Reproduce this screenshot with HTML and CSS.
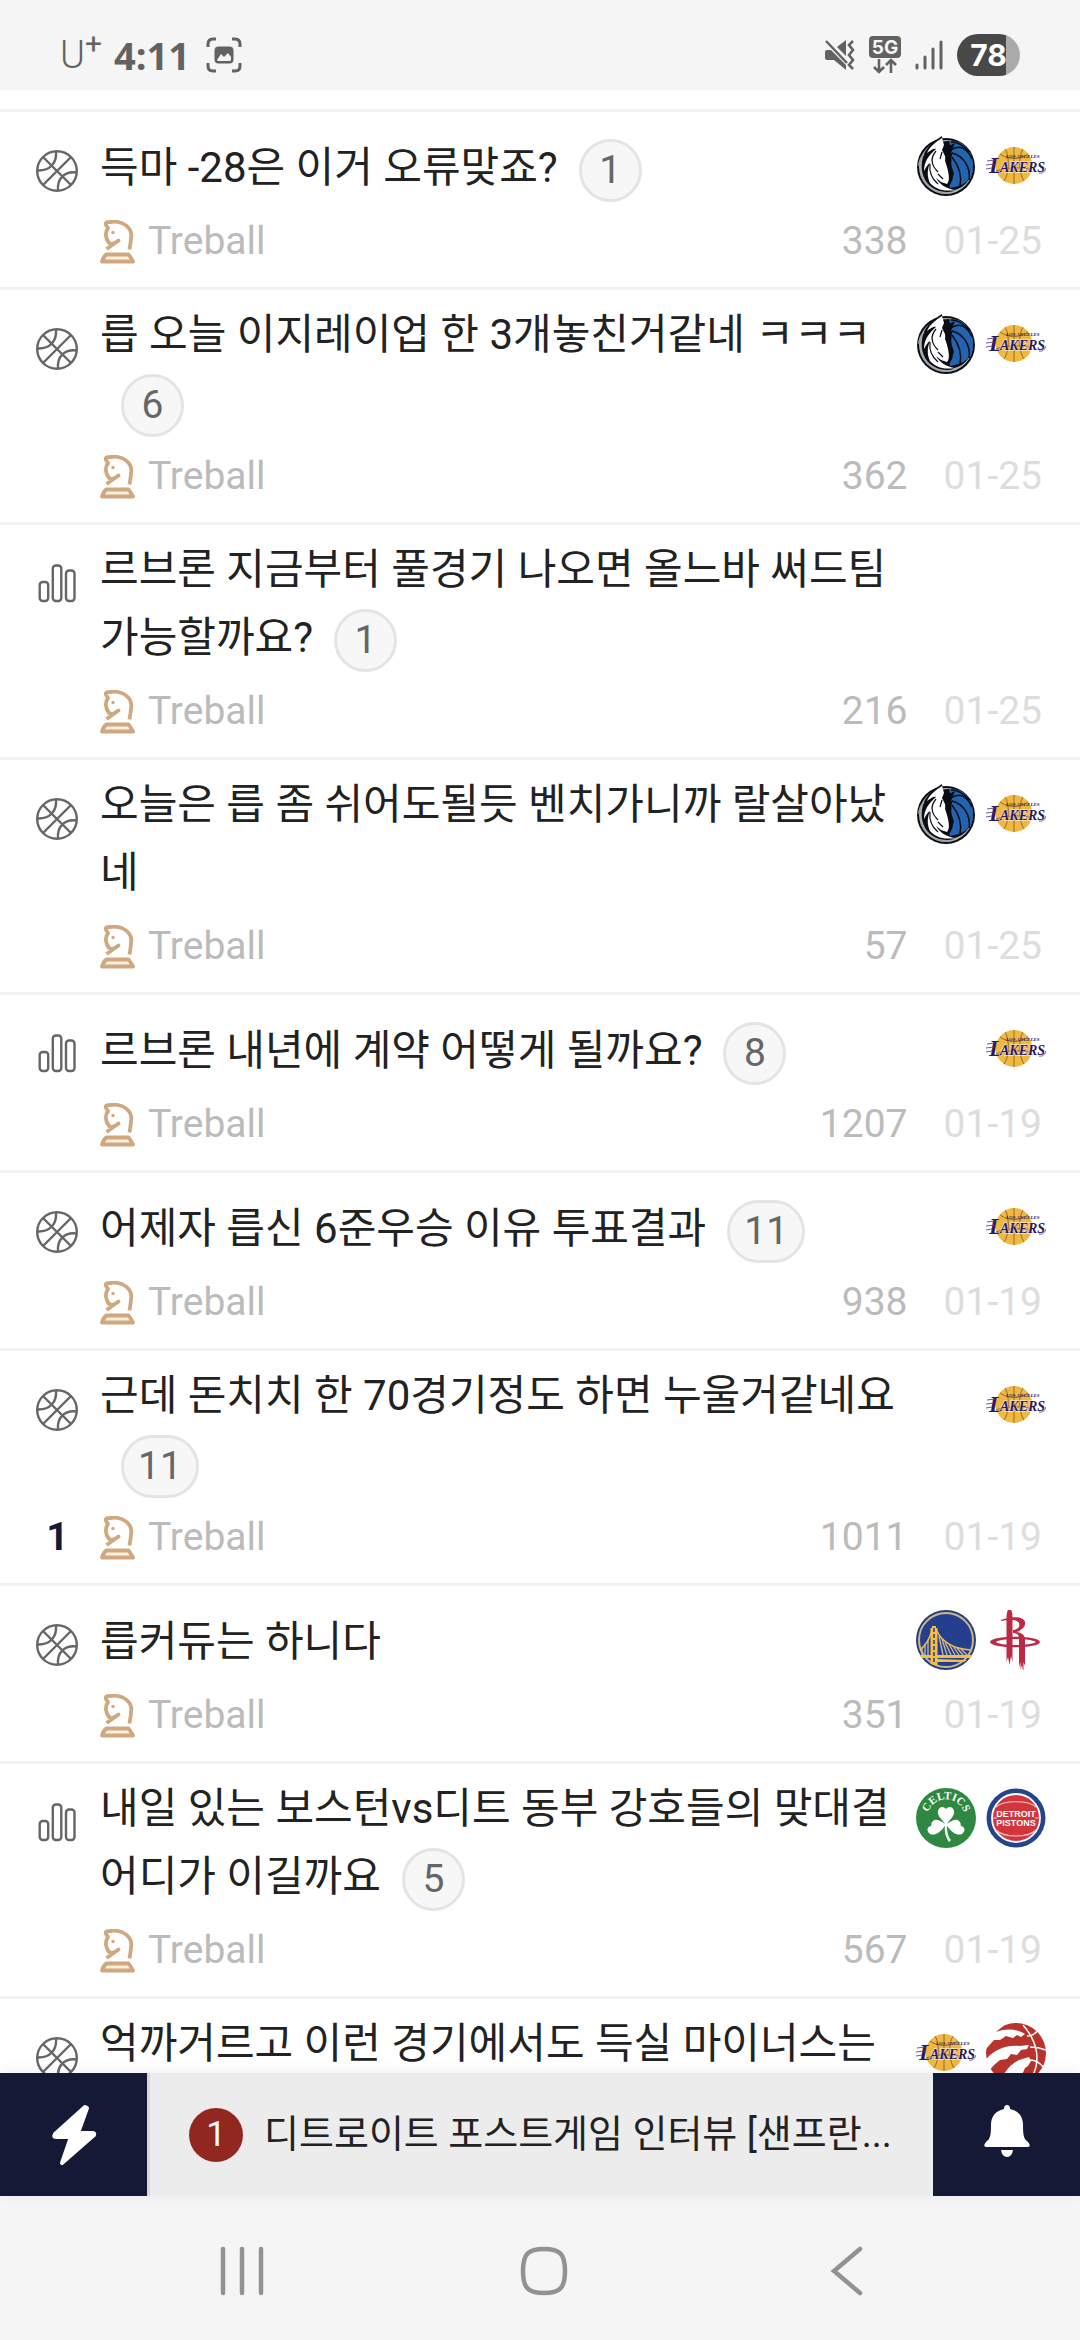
FILE: index.html
```html
<!DOCTYPE html>
<html lang="ko">
<head>
    <meta charset="UTF-8">
    <meta name="viewport" content="width=device-width, initial-scale=1.0">
    <title>Treball</title>
    <link rel="stylesheet" href="styles.css">
</head>
<body>
    <!-- shared icons -->
    <svg class="sprite" aria-hidden="true">
        <symbol id="ball" viewBox="0 0 42 42">
            <g fill="none" stroke="#666" stroke-width="2.4">
                <circle cx="21" cy="21" r="19.8"/>
                <path d="M7 7L35 35M35 7L7 35"/>
                <path d="M20 1.500C21 13 14 21 1.500 20.500M22 40.500C21 29 28 21 40.500 22.500"/>
            </g>
        </symbol>
        <symbol id="poll" viewBox="0 0 42 42">
            <g fill="none" stroke="#666" stroke-width="2.4">
                <rect x="3.700" y="19" width="8.500" height="19" rx="3"/>
                <rect x="16.800" y="2.500" width="8.500" height="35.500" rx="3"/>
                <rect x="30" y="7.500" width="8.500" height="30.500" rx="3"/>
            </g>
        </symbol>
        <symbol id="knight" viewBox="0 0 35 44">
            <g fill="none" stroke="#d0a880" stroke-width="3.800" stroke-linejoin="round">
                <path d="M6.500 29L18.500 20.500C13 25 11 24 9 23C5 18 5 12 8 8L6 5C5 2 7 2 10 2C24 0 33 9 31 18C31 22 30 25 29.500 29.500"/>
                <path d="M6.500 34.500H28.500C30 36 31 38 33 41.500H2C3 38 4 36 6.500 34.500Z" fill="#fdf0dc"/>
            </g>
            <circle cx="13" cy="12.500" r="1.700" fill="#d0a880"/>
        </symbol>

        <!-- team logos -->
        <symbol id="mavericks" viewBox="0 0 60 60">
            <circle cx="30" cy="31" r="29" fill="#0a0d12"/>
            <circle cx="30" cy="31" r="27" fill="#aeb3b8"/>
            <circle cx="32" cy="30" r="25" fill="#0a0d12"/>
            <path d="M33 5C50 4 58 18 57 32C56 44 48 50 34 52C32 38 39 28 33 5Z" fill="#2463b0"/>
            <path d="M35 14C43 8 51 12 56 23M36 17C48 20 55 32 53 44M36 21C43 30 46 40 44 50M35 6C43 6 47 10 54 16" fill="none" stroke="#0a0d12" stroke-width="1.500"/>
            <path d="M26 0C20 4 12 9 8 18C4 28 5 40 12 48C18 54 27 58 38 55C31 54 26 51 23 47L33 50C38 44 38 39 34 30L33 22L39 7L31 11L27 8Z" fill="#0a0d12"/>
            <path d="M26 2C20 6 14 10 11 17C15 14 18 12 20 13C12 20 8 26 8 35C10 31 12 28 14 27C11 34 11 41 14 47C20 53 27 56 38 54C30 52 24 49 20 42L25 46L31 48C34 45 33 38 31 31L29 20L26 14L28 9Z" fill="#fff"/>
            <path d="M20 15C14 22 15 29 22 36M14 28C13 36 16 43 22 48M22 38L27 43M26 16L24 23" fill="none" stroke="#0a0d12" stroke-width="1.200"/>
            <path d="M5 39C10 52 21 58 34 57M3 30C3 25 6 20 8 18" fill="none" stroke="#9da2a6" stroke-width="1.600"/>
            <path d="M31 13L36 10L34 18L37 16L34 25L38 38L33 48L33 35L29 25Z" fill="#0a0d12"/>
        </symbol>
        <symbol id="lakers" viewBox="0 0 60 60">
            <circle cx="28" cy="29.500" r="18.500" fill="#f0b840"/>
            <path d="M28 11V48M14 18C22 24 35 24 42 18M19 13C24 20 23 39 18 45M37 13C32 21 33 38 38 45M10 35C20 31 38 31 46 34" fill="none" stroke="#6d4a20" stroke-width="0.700"/>
            <g font-family="Liberation Serif, serif" font-weight="bold" font-style="italic" fill="#2b1762">
                <text x="20" y="22" font-size="5">LOS ANGELES</text>
                <text x="3" y="37" font-size="23">L</text>
                <text x="14" y="36" font-size="14" stroke="#fff" stroke-width="0.800" paint-order="stroke">AKERS</text>
            </g>
            <path d="M1 25L9 24M0 29L8 28M0 33L6 32M53 37C57 38 59 35 60 32" fill="none" stroke="#604498" stroke-width="0.900"/>
        </symbol>
        <symbol id="warriors" viewBox="0 0 60 60">
            <circle cx="30" cy="30" r="30" fill="#263f73"/>
            <circle cx="30" cy="30" r="27" fill="#243f90" stroke="#ccb68f" stroke-width="2"/>
            <path d="M4 40C10 35 14 28 16 20M20 19C26 34 40 39 55 40" fill="none" stroke="#f5bd43" stroke-width="1.500"/>
            <path d="M6 38V45M9 35V45M12 30V45M23 26L27 45M26 29L31 45M29 32L35 45M33 34L39 45M37 36L43 45M41 38L47 45M45 39L51 45" stroke="#cdbb96" stroke-width="1.300"/>
            <path d="M4 45H56L55 48H5ZM21 49L51 50L48 52H21Z" fill="#f5bd43"/>
            <path d="M14.500 18H16V16H20V18H21.500V56L14.500 54Z" fill="#f5bd43"/>
            <path d="M18 18V54" stroke="#243f90" stroke-width="1.500" stroke-dasharray="4 2"/>
        </symbol>
        <symbol id="rockets" viewBox="0 0 60 60">
            <g fill="#bd2845">
                <path d="M23.500 -3C26 1 26.500 3 26.500 8V52L25 46L23.500 55L22 47L20.500 52V8C20.500 4 21 1 23.500 -3Z"/>
                <path d="M15 10C22 7 37 5 39 12C40 17 35 20 31 22C36 23 39 25 39 30V56L37.500 52V64L36 55L34.500 60V52L33 57V28C33 24 30 23 27 23V20C33 19 34 16 33 13C31 9 22 10 15 11Z"/>
                <path fill-rule="evenodd" d="M4 32C5 25 53 25 54 32C53 39 5 39 4 32ZM10 32C13 36 45 36 50 32C45 28 14 28 10 32Z"/>
            </g>
        </symbol>
        <symbol id="celtics" viewBox="0 0 60 60">
            <path id="celtics-arc" d="M12 35A18.700 18.700 0 1 1 48 35" fill="none"/>
            <circle cx="30" cy="30" r="30" fill="#2f8842"/>
            <text font-family="Liberation Serif, serif" font-weight="bold" font-size="11" fill="#fff" text-anchor="middle"><textPath href="#celtics-arc" startOffset="50%">CELTICS</textPath></text>
            <g fill="#fff">
                <path d="M30 37C25 30 21 28 22 23C23 18 28 18 30 21C32 18 37 18 38 23C39 28 34 31 30 37Z"/>
                <path d="M30 36C24 33 20 30 17 33C14 36 16 38 15 38C10 39 11 44 14 46C18 48 25 45 30 36Z"/>
                <path d="M30 36C36 33 40 30 43 33C46 36 44 38 45 38C50 39 49 44 46 46C42 48 35 45 30 36Z"/>
                <path d="M29 36H31C31 44 32 49 35 52L33 54C30 49 28 45 29 36Z"/>
            </g>
        </symbol>
        <symbol id="pistons" viewBox="0 0 60 60">
            <circle cx="30" cy="30" r="29.500" fill="#24458b"/>
            <circle cx="30" cy="30" r="24" fill="#d2363c" stroke="#fff" stroke-width="1.800"/>
            <path d="M10 19C18 12 42 12 50 19M10 42C18 50 42 50 50 42M6 30H11M49 30H54" fill="none" stroke="#f3c6c8" stroke-width="1.200"/>
            <g font-family="Liberation Sans, sans-serif" font-weight="bold" font-size="9" fill="#fff" text-anchor="middle">
                <text x="30" y="29">DETROIT</text>
                <text x="30" y="38">PISTONS</text>
            </g>
        </symbol>
        <symbol id="raptors" viewBox="0 0 60 60">
            <circle cx="30" cy="30" r="30" fill="#b8332e"/>
            <path d="M0 0H21L10 9C20 5 31 6 39 11L35 14L31 12L27 15L20 13L14 17L8 17L0 26Z" fill="#fff"/>
            <path d="M0 36C10 26 20 22 33 23L43 22L41 26L35 27L31 32L25 31L21 36L14 37L8 42L3 48L0 60Z" fill="#fff"/>
            <path d="M14 60C18 48 24 42 33 37L43 34L45 38L42 43L39 45L36 52L30 60Z" fill="#fff"/>
            <path d="M37 2C51 18 57 39 43 59M41 13C47 13 50 10 52 7M44 24C50 24 55 25 60 27M44 37C50 37 54 40 57 44" fill="none" stroke="#fff" stroke-width="1.500"/>
        </symbol>
    </svg>

    <header class="status-bar">
        <div class="status-left">
            <span class="carrier">U<sup>+</sup></span>
            <span class="clock">4:11</span>
            <svg class="capture" width="36" height="36" viewBox="0 0 36 36">
                <path d="M2 10V7Q2 2 7 2H10M26 2H29Q34 2 34 7V10M34 26V29Q34 34 29 34H26M10 34H7Q2 34 2 29V26" fill="none" stroke="#626262" stroke-width="3"/>
                <rect x="8.500" y="9.500" width="19" height="17" rx="4" fill="#626262"/>
                <path d="M11 23L15 17L18 20L22 16L25 20V23Q25 24 23 24H12Z" fill="#f5f5f5"/>
            </svg>
        </div>
        <div class="status-right">
            <svg width="30" height="30" viewBox="0 0 30 30">
                <path d="M0 12Q0 10 2 10H6L21 25V30L9 20H2Q0 20 0 18ZM12 7L21 0V16Z" fill="#626262"/>
                <path d="M1 1L22 23" stroke="#626262" stroke-width="2.500"/>
                <path d="M28 1L24 5L28 10L24 15L28 20L24 25L28 29" fill="none" stroke="#626262" stroke-width="2.600"/>
            </svg>
            <svg width="32" height="38" viewBox="0 0 32 38">
                <rect width="32" height="22" rx="4" fill="#626262"/>
                <text x="16" y="18" text-anchor="middle" font-family="Inter, sans-serif" font-size="19" font-weight="700" fill="#f5f5f5">5G</text>
                <path d="M10 23V36M5 31L10 36L15 31M22 37V24M17 29L22 24L27 29" fill="none" stroke="#626262" stroke-width="2.600"/>
            </svg>
            <svg width="28" height="30" viewBox="0 0 28 30">
                <path d="M2 25V28M10 17V28M18 9V28M26 2V28" stroke="#626262" stroke-width="3" stroke-linecap="round"/>
            </svg>
            <span class="battery">78</span>
        </div>
    </header>

    <main class="board">
        <article class="post single">
            <svg class="kind"><use href="#ball"/></svg>
            <a class="title" href="#">득마 -28은 이거 오류맞죠?<span class="count">1</span></a>
            <div class="teams"><svg><use href="#mavericks"/></svg><svg><use href="#lakers"/></svg></div>
            <span class="likes"></span>
            <div class="meta"><svg class="rank"><use href="#knight"/></svg><span class="author">Treball</span><span class="views">338</span><time>01-25</time></div>
        </article>

        <article class="post">
            <svg class="kind"><use href="#ball"/></svg>
            <a class="title" href="#">릅 오늘 이지레이업 한 3개놓친거같네 ㅋㅋㅋ<span class="count">6</span></a>
            <div class="teams"><svg><use href="#mavericks"/></svg><svg><use href="#lakers"/></svg></div>
            <span class="likes"></span>
            <div class="meta"><svg class="rank"><use href="#knight"/></svg><span class="author">Treball</span><span class="views">362</span><time>01-25</time></div>
        </article>

        <article class="post">
            <svg class="kind"><use href="#poll"/></svg>
            <a class="title" href="#">르브론 지금부터 풀경기 나오면 올느바 써드팀 가능할까요?<span class="count">1</span></a>
            <div class="teams"></div>
            <span class="likes"></span>
            <div class="meta"><svg class="rank"><use href="#knight"/></svg><span class="author">Treball</span><span class="views">216</span><time>01-25</time></div>
        </article>

        <article class="post">
            <svg class="kind"><use href="#ball"/></svg>
            <a class="title" href="#">오늘은 릅 좀 쉬어도될듯 벤치가니까 랄살아났네</a>
            <div class="teams"><svg><use href="#mavericks"/></svg><svg><use href="#lakers"/></svg></div>
            <span class="likes"></span>
            <div class="meta"><svg class="rank"><use href="#knight"/></svg><span class="author">Treball</span><span class="views">57</span><time>01-25</time></div>
        </article>

        <article class="post single">
            <svg class="kind"><use href="#poll"/></svg>
            <a class="title" href="#">르브론 내년에 계약 어떻게 될까요?<span class="count">8</span></a>
            <div class="teams"><svg><use href="#lakers"/></svg></div>
            <span class="likes"></span>
            <div class="meta"><svg class="rank"><use href="#knight"/></svg><span class="author">Treball</span><span class="views">1207</span><time>01-19</time></div>
        </article>

        <article class="post single">
            <svg class="kind"><use href="#ball"/></svg>
            <a class="title" href="#">어제자 릅신 6준우승 이유 투표결과<span class="count">11</span></a>
            <div class="teams"><svg><use href="#lakers"/></svg></div>
            <span class="likes"></span>
            <div class="meta"><svg class="rank"><use href="#knight"/></svg><span class="author">Treball</span><span class="views">938</span><time>01-19</time></div>
        </article>

        <article class="post">
            <svg class="kind"><use href="#ball"/></svg>
            <a class="title" href="#">근데 돈치치 한 70경기정도 하면 누울거같네요<span class="count">11</span></a>
            <div class="teams"><svg><use href="#lakers"/></svg></div>
            <span class="likes">1</span>
            <div class="meta"><svg class="rank"><use href="#knight"/></svg><span class="author">Treball</span><span class="views">1011</span><time>01-19</time></div>
        </article>

        <article class="post single">
            <svg class="kind"><use href="#ball"/></svg>
            <a class="title" href="#">릅커듀는 하니다</a>
            <div class="teams"><svg><use href="#warriors"/></svg><svg><use href="#rockets"/></svg></div>
            <span class="likes"></span>
            <div class="meta"><svg class="rank"><use href="#knight"/></svg><span class="author">Treball</span><span class="views">351</span><time>01-19</time></div>
        </article>

        <article class="post">
            <svg class="kind"><use href="#poll"/></svg>
            <a class="title" href="#">내일 있는 보스턴vs디트 동부 강호들의 맞대결 어디가 이길까요<span class="count">5</span></a>
            <div class="teams"><svg><use href="#celtics"/></svg><svg><use href="#pistons"/></svg></div>
            <span class="likes"></span>
            <div class="meta"><svg class="rank"><use href="#knight"/></svg><span class="author">Treball</span><span class="views">567</span><time>01-19</time></div>
        </article>

        <article class="post">
            <svg class="kind"><use href="#ball"/></svg>
            <a class="title" href="#">억까거르고 이런 경기에서도 득실 마이너스는</a>
            <div class="teams"><svg><use href="#lakers"/></svg><svg><use href="#raptors"/></svg></div>
        </article>
    </main>

    <footer class="ticker">
        <button class="ticker-button" aria-label="번개">
            <svg width="46" height="62" viewBox="0 0 46 62"><path d="M34 3L4 30Q2 33 5 33H20L11 59L43 31Q44 29 41 29H27L36 4Z" fill="#fff" stroke="#fff" stroke-width="4" stroke-linejoin="round"/></svg>
        </button>
        <a class="headline" href="#">
            <span class="number">1</span>
            <span class="headline-text">디트로이트 포스트게임 인터뷰 [샌프란...</span>
        </a>
        <button class="ticker-button" aria-label="알림">
            <svg width="46" height="62" viewBox="0 0 46 62"><path d="M23 1Q26 1 26 5C35 7 39 13 39 21C39 32 40 35 44 38Q48 43 43 43H3Q-2 43 2 38C6 35 7 32 7 21C7 13 11 7 20 5Q20 1 23 1ZM17 46H29Q28 53 23 53Q18 53 17 46Z" fill="#fff"/></svg>
        </button>
    </footer>

    <nav class="system-nav">
        <button aria-label="최근 앱"><svg width="48" height="50" viewBox="0 0 48 50"><path d="M5 3V47M24 3V47M43 3V47"/></svg></button>
        <button aria-label="홈"><svg width="48" height="50" viewBox="0 0 48 50"><path d="M24 3C40 3 45 8 45 25S40 47 24 47S3 42 3 25S8 3 24 3Z"/></svg></button>
        <button aria-label="뒤로"><svg width="48" height="50" viewBox="0 0 48 50"><path d="M37 3L11 25L37 47"/></svg></button>
    </nav>
</body>
</html>
```

FILE: styles.css
```css
* {
    box-sizing: border-box;
}

body {
    display: flex;
    flex-direction: column;
    height: 100vh;
    margin: 0;
    overflow: hidden;
    background: #fff;
    color: #222;
    font-family: Roboto, 'Noto Sans CJK KR', sans-serif;
}

a {
    color: inherit;
    text-decoration: none;
}

button {
    padding: 0;
    border: none;
    background: none;
    cursor: pointer;
}

svg {
    display: block;
    flex: none;
}

.sprite {
    display: none;
}

/* Status bar */
.status-bar {
    display: flex;
    justify-content: space-between;
    align-items: center;
    flex: none;
    height: 90px;
    padding: 20px 60px 0;
    background: #f5f5f5;
    color: #626262;
}

.status-left,
.status-right {
    display: flex;
    align-items: center;
}

.carrier {
    font-size: 38px;
    font-weight: 300;
    line-height: 40px;
}

.carrier sup {
    font-size: 30px;
    font-weight: 400;
    line-height: 0;
}

.clock {
    margin-left: 12px;
    font-family: 'Open Sans', sans-serif;
    font-size: 38px;
    font-weight: 700;
    line-height: 40px;
}

.capture {
    margin-left: 16px;
}

.status-right {
    gap: 14px;
}

.battery {
    width: 63px;
    height: 42px;
    border-radius: 21px;
    background: linear-gradient(90deg, #484848 78%, #aaa 78%);
    color: #fff;
    font-family: Inter, sans-serif;
    font-size: 30px;
    font-weight: 700;
    line-height: 42px;
    text-align: center;
}

/* Post list */
.board {
    flex: 1;
    min-height: 0;
    padding-top: 19px;
    overflow: hidden;
}

.post {
    display: grid;
    grid-template-columns: 43px 1fr auto;
    column-gap: 21px;
    padding: 11px 34px 17px 36px;
    border-top: 3px solid #f2f2f2;
}

.kind {
    width: 42px;
    height: 42px;
    margin-top: 27px;
}

.title {
    font-size: 42px;
    line-height: 68px;
}

.single .title {
    padding-top: 11px;
}

.count {
    display: inline-block;
    min-width: 63px;
    height: 63px;
    margin-left: 21px;
    padding: 0 14px;
    border: 3px solid #e4e4e4;
    border-radius: 32px;
    background: #f7f7f7;
    color: #666;
    font-size: 39px;
    line-height: 57px;
    text-align: center;
    vertical-align: bottom;
}

.teams {
    display: flex;
    justify-content: flex-end;
    gap: 10px;
    min-width: 119px;
    padding-top: 13px;
}

.teams svg {
    width: 60px;
    height: 60px;
    overflow: visible;
}

.meta {
    grid-column: 2 / 4;
    display: flex;
    align-items: center;
    height: 57px;
    padding-right: 4px;
    margin-top: 11px;
    color: #bbb;
    font-size: 39px;
    line-height: 57px;
}

.rank {
    width: 35px;
    height: 44px;
    margin-right: 13px;
}

.views {
    margin-left: auto;
}

.meta time {
    margin-left: 36px;
    color: #ddd;
}

.likes {
    margin-top: 11px;
    color: #141a36;
    font-size: 39px;
    font-weight: 700;
    line-height: 57px;
    text-align: center;
}

/* Headline ticker */
.ticker {
    display: flex;
    position: relative;
    flex: none;
    height: 123px;
    background: #ececec;
    box-shadow: 0 -2px 14px rgba(0, 0, 0, 0.06);
}

.ticker-button {
    display: flex;
    justify-content: center;
    align-items: center;
    width: 147px;
    background: #141a36;
}

.headline {
    display: flex;
    flex: 1;
    align-items: center;
    gap: 21px;
    min-width: 0;
    padding: 0 36px 0 39px;
    border-left: 3px solid #d5d8df;
}

.number {
    flex: none;
    width: 54px;
    height: 54px;
    border-radius: 50%;
    background: #922722;
    color: #fff;
    font-size: 35px;
    line-height: 54px;
    text-align: center;
}

.headline-text {
    font-size: 38px;
    line-height: 57px;
    white-space: nowrap;
}

/* Android navigation */
.system-nav {
    display: grid;
    grid-template-columns: repeat(3, 1fr);
    flex: none;
    height: 144px;
    padding: 6px 82px 0 91px;
    background: #f5f5f5;
}

.system-nav button {
    display: flex;
    justify-content: center;
    align-items: center;
}

.system-nav path {
    fill: none;
    stroke: #929292;
    stroke-width: 4.500;
    stroke-linecap: round;
}
```
